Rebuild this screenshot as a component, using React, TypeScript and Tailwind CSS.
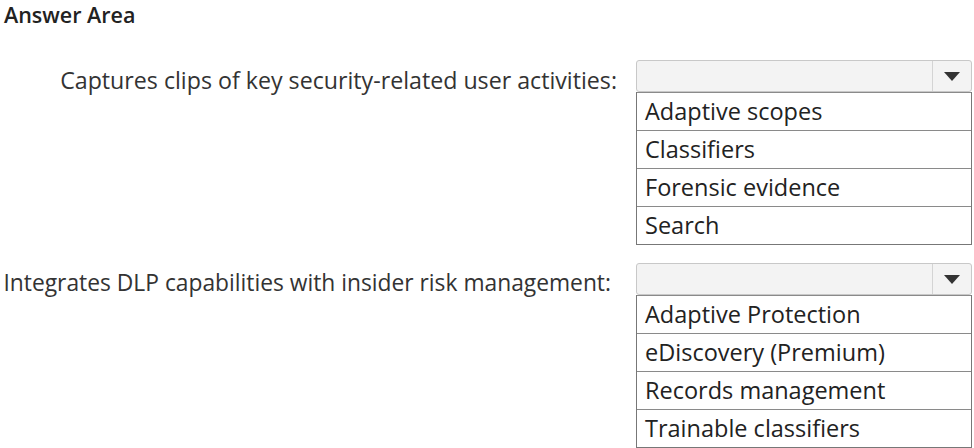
const font = { fontFamily: '"Open Sans", "Noto Sans", Arial, sans-serif' };

function Dropdown({ options }: { options: string[] }) {
  return (
    <div className="w-[336px] shrink-0">
      <div className="h-[32px] flex border border-[#c8c8c8] rounded-[3px] bg-[#f3f3f3]">
        <div className="flex-1" />
        <div className="w-[39px] border-l border-[#d4d4d4] flex items-center justify-center">
          <svg width="16" height="9" viewBox="0 0 16 9">
            <path d="M0 0 H16 L8 9 Z" fill="#333" />
          </svg>
        </div>
      </div>
      <div className="border border-[#777] border-t-0 bg-white">
        {options.map((o) => (
          <div
            key={o}
            className="h-[38px] flex items-center px-[8px] text-[23.5px] text-[#222] border-t border-[#8a8a8a]"
          >
            {o}
          </div>
        ))}
      </div>
    </div>
  );
}

export default function App() {
  return (
    <div className="w-[974px] h-[448px] bg-white overflow-hidden" style={font}>
      <div className="pl-[4px] pt-[1px] h-[60px] text-[21.5px] font-semibold text-[#222] leading-[28px]">Answer Area</div>
      <div className="flex items-start justify-end pr-[2px]">
        <div className="whitespace-nowrap text-[23.2px] text-[#333] leading-[32px] pt-[4px] pr-[19px]">Captures clips of key security-related user activities:</div>
        <Dropdown options={["Adaptive scopes", "Classifiers", "Forensic evidence", "Search"]} />
      </div>
      <div className="flex items-start justify-end pr-[2px] mt-[18px]">
        <div className="whitespace-nowrap text-[22.8px] text-[#333] leading-[32px] pt-[4px] pr-[25px]">Integrates DLP capabilities with insider risk management:</div>
        <Dropdown options={["Adaptive Protection", "eDiscovery (Premium)", "Records management", "Trainable classifiers"]} />
      </div>
    </div>
  );
}
